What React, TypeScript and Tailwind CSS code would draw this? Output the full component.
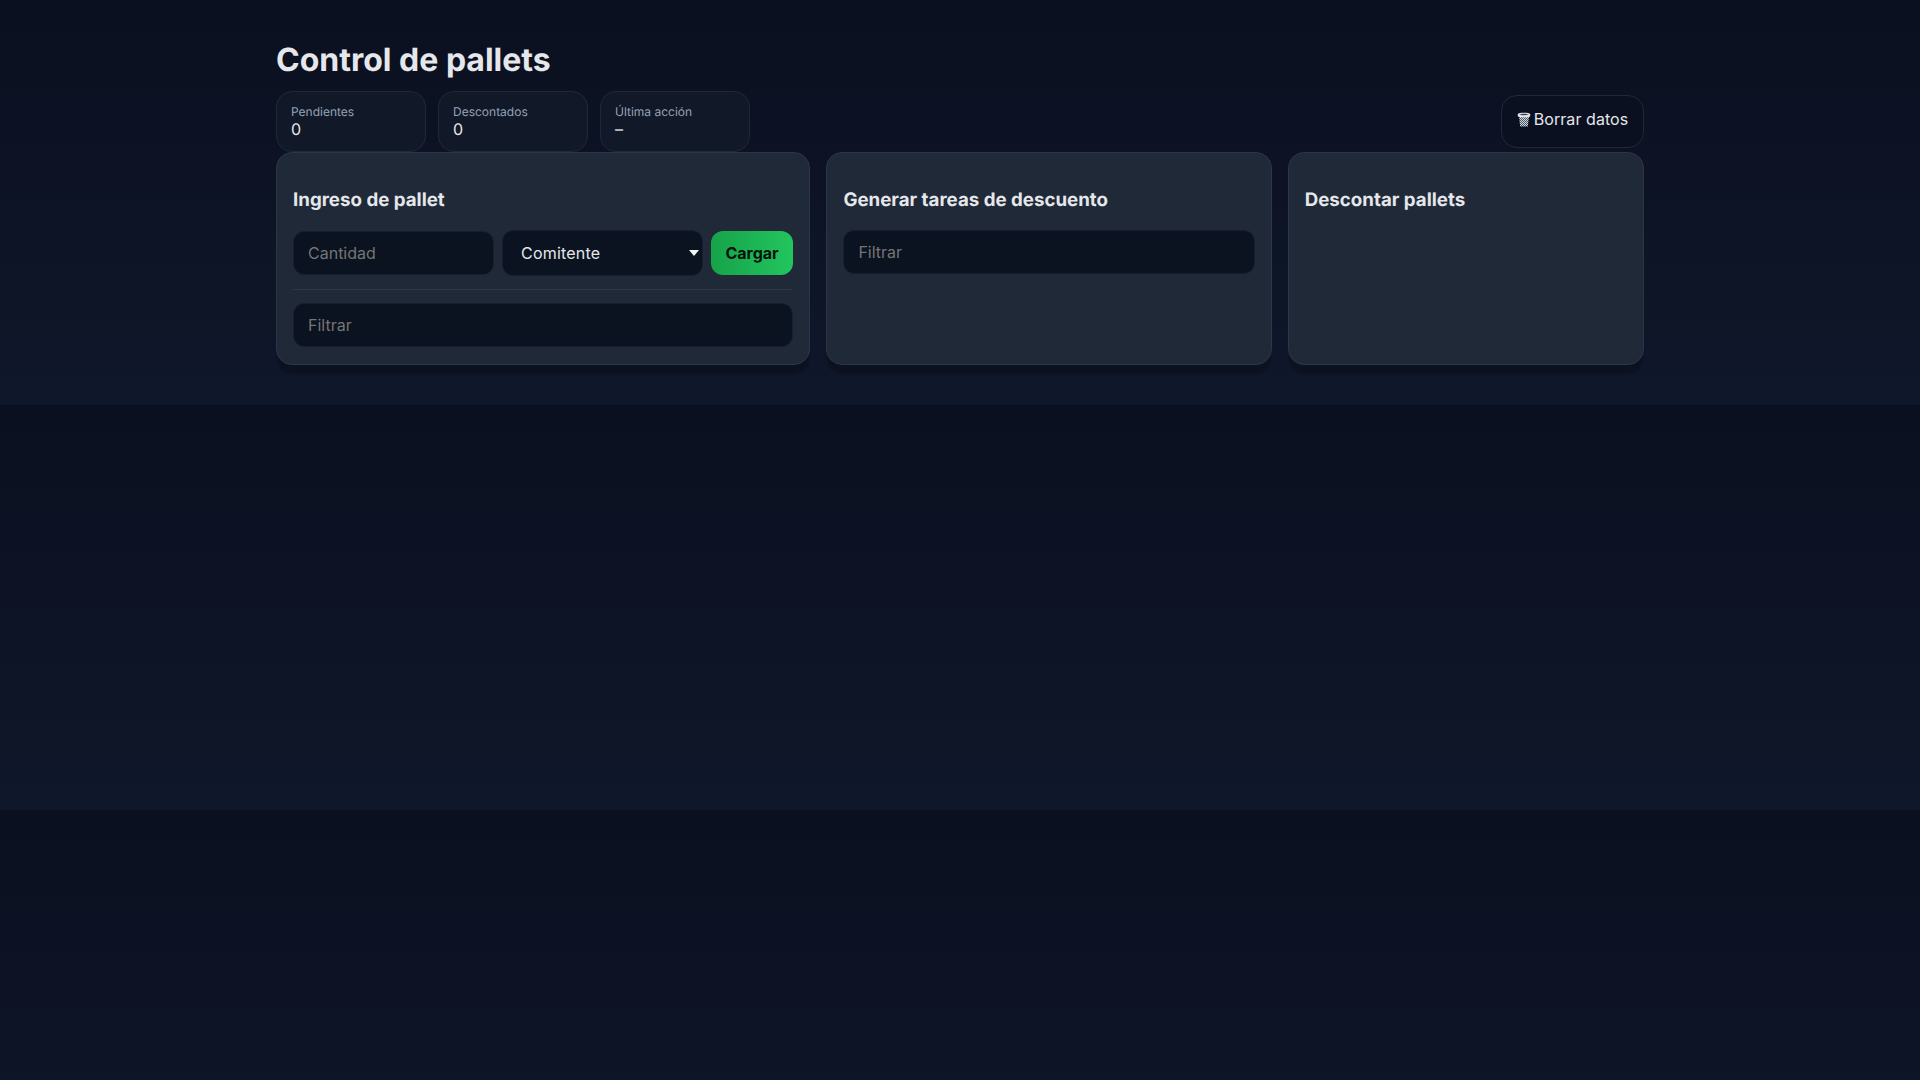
import React from 'react';

const stats = [
  { label: 'Pendientes', value: '0' },
  { label: 'Descontados', value: '0' },
  { label: 'Última acción', value: '–' },
];

const fieldClass =
  'h-[44px] rounded-[11px] border border-[#172033] bg-[#0b1220] px-[14px] text-base text-[#e5e7eb] outline-none placeholder:text-[#757575]';

function Card({ title, children }: { title: string; children?: React.ReactNode }) {
  return (
    <section className="rounded-2xl border border-[#2b3648] bg-[#1f2937] px-4 pt-4 pb-[17px] shadow-[0_10px_2px_-1px_rgba(0,0,0,0.2)]">
      <h3 className="mt-[18.72px] mb-[19.72px] text-[18.72px] leading-[23px] font-bold text-[#e5e7eb]">{title}</h3>
      {children}
    </section>
  );
}

// hatched wastebasket drawn in the button
function Basket() {
  return (
    <svg width="14" height="15" viewBox="0 0 14 15" className="mr-[3px] inline-block align-[-2px]">
      <defs>
        <pattern id="hatch" width="2" height="2" patternUnits="userSpaceOnUse">
          <rect width="2" height="2" fill="#4b5563" />
          <rect width="1" height="1" fill="#d1d5db" />
          <rect x="1" y="1" width="1" height="1" fill="#d1d5db" />
        </pattern>
      </defs>
      <path d="M2 4.5h10L10.8 14.4H3.2z" fill="url(#hatch)" />
      <path d="M0.6 2.2C2 0.4 12 0.4 13.4 2.2L13 4.4C10.5 5.6 3.5 5.6 1 4.4z" fill="#e5e7eb" />
      <path d="M2 2.5C4.5 1.6 9.5 1.6 12 2.5C9.5 3.4 4.5 3.4 2 2.5z" fill="#374151" />
    </svg>
  );
}

export default function App() {
  return (
    <div className="min-h-screen bg-[linear-gradient(180deg,#0b1020,#0f172a)] bg-size-[100%_405px] font-['Inter',sans-serif] text-[#e5e7eb] [text-rendering:geometricPrecision]">
      <div className="mx-auto w-[1368px] pt-[39px]">
        <h1 className="text-[32px] leading-[42px] font-bold text-[#e5e7eb]">Control de pallets</h1>
        <div className="mt-[10px] flex items-center justify-between">
          <div className="flex gap-3">
            {stats.map((s) => (
              <div key={s.label} className="h-[61px] w-[150px] rounded-2xl border border-[#1f2937] bg-[#111827] px-[14px] pt-[11px]">
                <div className="text-xs leading-[18px] text-[#94a3b8]">{s.label}</div>
                <div className="-mt-px text-base leading-[18px] text-[#e5e7eb]">{s.value}</div>
              </div>
            ))}
          </div>
          <button className="h-[53px] w-[143px] rounded-2xl border border-[#1f2937] bg-[#0b1020] pb-[6px] text-base tracking-[0.05px] text-[#e5e7eb]">
            <Basket />
            Borrar datos
          </button>
        </div>

        <div className="grid grid-cols-[1.5fr_1.25fr_1fr] gap-4">
          <Card title="Ingreso de pallet">
            <div className="flex items-center gap-2">
              <input placeholder="Cantidad" className={`${fieldClass} w-[201px] shrink-0`} />
              <div className="relative w-[201px] shrink-0">
                <select className="block h-[46px] w-full appearance-none rounded-[11px] border border-[#172033] bg-[#0b1220] px-[18px] text-base tracking-[0.2px] text-[#e5e7eb] outline-none">
                  <option>Comitente</option>
                </select>
                <svg width="10" height="6" viewBox="0 0 10 6" className="pointer-events-none absolute top-[20px] right-[4px]">
                  <path d="M0 0h10L5 6z" fill="#f3f4f6" />
                </svg>
              </div>
              <button className="h-[44px] w-[82px] shrink-0 rounded-xl bg-[linear-gradient(90deg,#16a34a,#22c55e)] text-base font-bold text-[#04120a]">
                Cargar
              </button>
            </div>
            <hr className="my-[13px] border-[#2b3648]" />
            <input placeholder="Filtrar" className={`${fieldClass} w-full`} />
          </Card>
          <Card title="Generar tareas de descuento">
            <input placeholder="Filtrar" className={`${fieldClass} w-full`} />
          </Card>
          <Card title="Descontar pallets" />
        </div>
      </div>
    </div>
  );
}
